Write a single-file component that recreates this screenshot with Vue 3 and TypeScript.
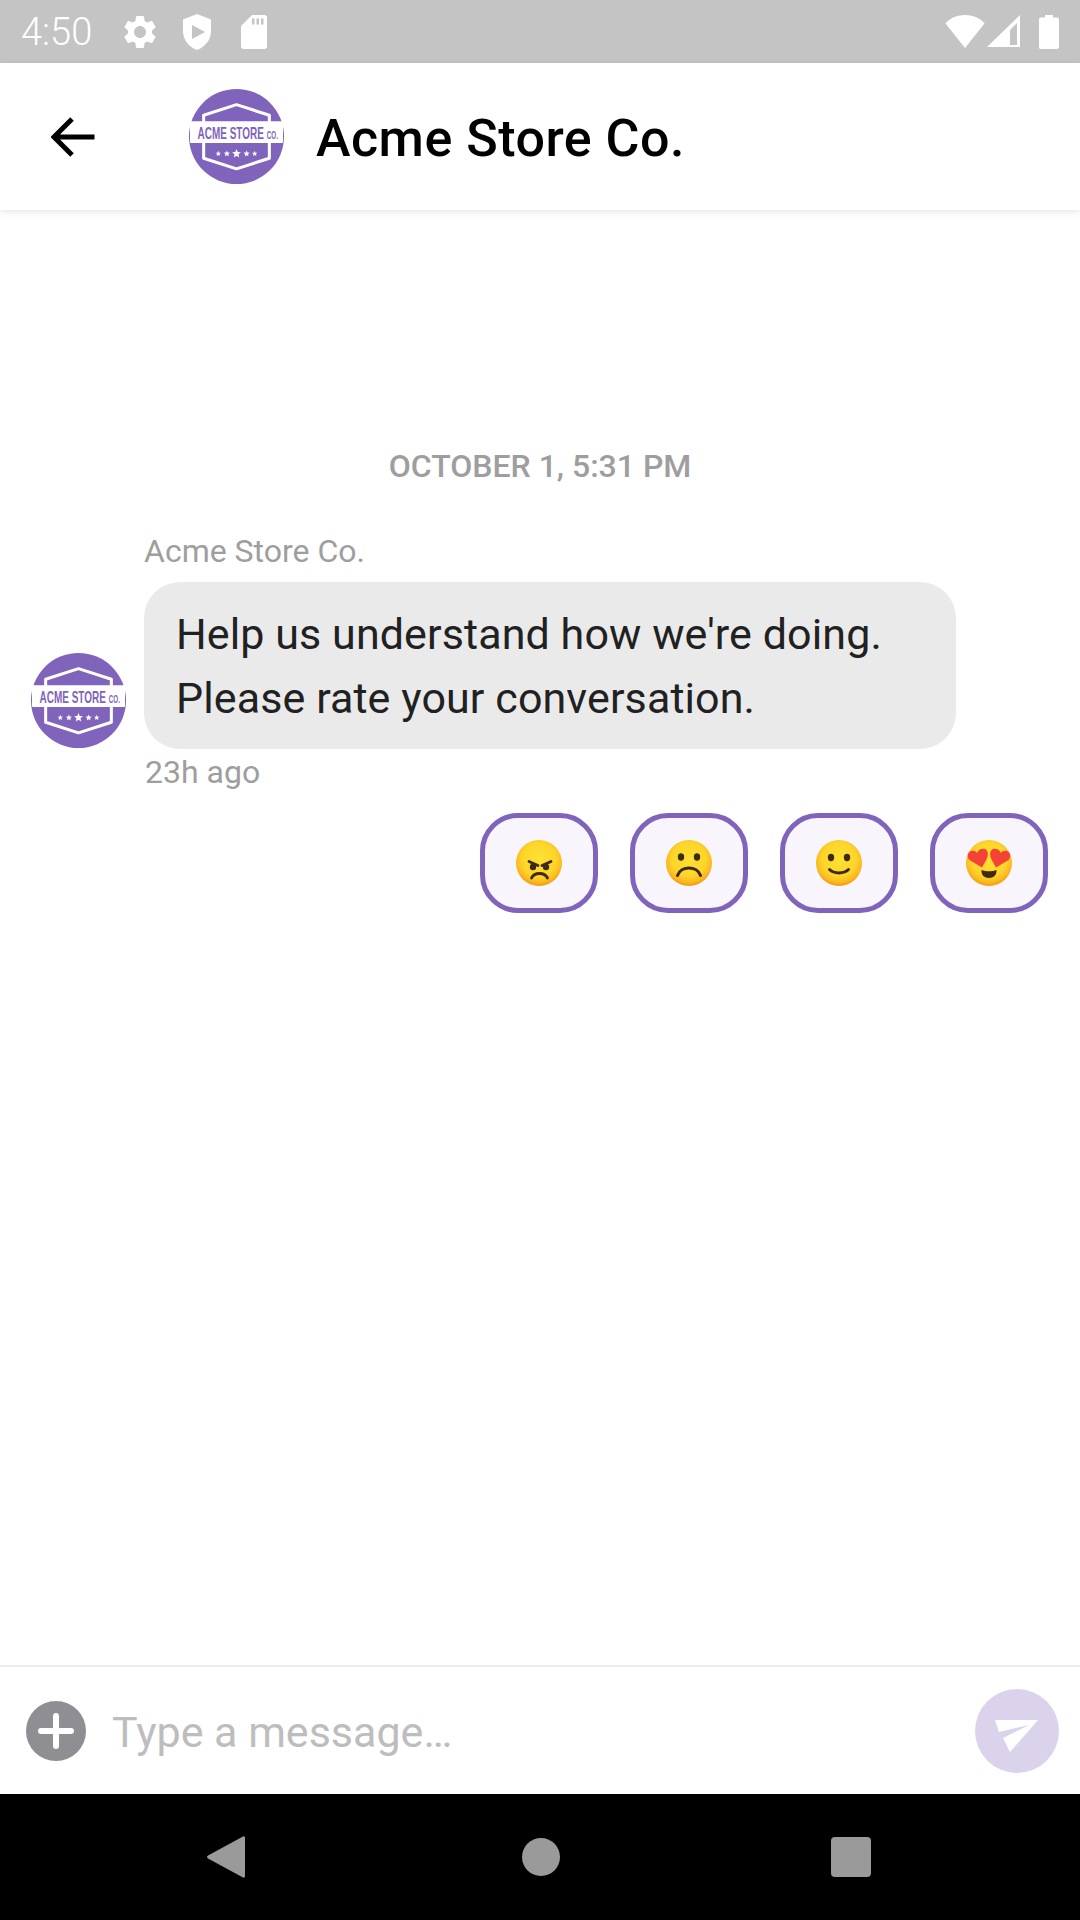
<template>
  <div class="screen">
    <!-- shared logo -->
    <svg class="defs" width="0" height="0" aria-hidden="true">
      <defs>
        <symbol id="acme-logo" viewBox="0 0 94 94">
          <circle cx="47" cy="47" r="47" fill="#8064bb" />
          <path d="M47 15.5 79.5 26V68.5L47 79 14.5 68.5V26Z" fill="none" stroke="#fff" stroke-width="3" stroke-linejoin="round" />
          <rect x="1" y="32" width="92" height="21.5" rx="1" fill="#fff" />
          <text x="8.5" y="49" textLength="65.5" lengthAdjust="spacingAndGlyphs" font-family="'Liberation Sans', sans-serif" font-weight="700" font-size="16.5" fill="#8064bb">ACME STORE</text>
          <text x="77" y="49" textLength="11" lengthAdjust="spacingAndGlyphs" font-family="'Liberation Sans', sans-serif" font-weight="700" font-size="10" fill="#8064bb">CO.</text>
          <polygon v-for="s in stars" :key="s.x" :points="starPoints(s.x, 64, s.r)" fill="#fff" />
        </symbol>
        <radialGradient id="face" cx="50%" cy="42%" r="56%">
          <stop offset="0%" stop-color="#fee133" />
          <stop offset="66%" stop-color="#fdd52a" />
          <stop offset="90%" stop-color="#fbb81f" />
          <stop offset="100%" stop-color="#f59e16" />
        </radialGradient>
      </defs>
    </svg>

    <div class="status-bar">
      <span class="clock">4:50</span>
      <svg class="st gear" viewBox="0 0 24 24"><path fill="#fff" d="M19.14 12.94c.04-.3.06-.61.06-.94 0-.32-.02-.64-.07-.94l2.03-1.58c.18-.14.23-.41.12-.61l-1.92-3.32c-.12-.22-.37-.29-.59-.22l-2.39.96c-.5-.38-1.03-.7-1.62-.94l-.36-2.54c-.04-.24-.24-.41-.48-.41h-3.84c-.24 0-.43.17-.47.41l-.36 2.54c-.59.24-1.13.57-1.62.94l-2.39-.96c-.22-.08-.47 0-.59.22L2.74 8.87c-.12.21-.08.47.12.61l2.03 1.58c-.05.3-.09.63-.09.94s.02.64.07.94l-2.03 1.58c-.18.14-.23.41-.12.61l1.92 3.32c.12.22.37.29.59.22l2.39-.96c.5.38 1.03.7 1.62.94l.36 2.54c.05.24.24.41.48.41h3.84c.24 0 .44-.17.47-.41l.36-2.54c.59-.24 1.13-.56 1.62-.94l2.39.96c.22.08.47 0 .59-.22l1.92-3.32c.12-.22.07-.47-.12-.61l-2.01-1.58zM12 15.6c-1.98 0-3.6-1.62-3.6-3.6s1.62-3.6 3.6-3.6 3.6 1.62 3.6 3.6-1.62 3.6-3.6 3.6z" /></svg>
      <svg class="st shield" viewBox="0 0 30 36"><path fill="#fff" fill-rule="evenodd" d="M15 0 29 5.5V17C29 26 23 33 15 36 7 33 1 26 1 17V5.5ZM10 11V25L23 18Z" /></svg>
      <svg class="st sd" viewBox="0 0 26 34"><path fill="#fff" fill-rule="evenodd" d="M11 0H23.5C25 0 26 1 26 2.5V31.5C26 33 25 34 23.5 34H2.5C1 34 0 33 0 31.5V11ZM11 3.5V9.5H13.5V3.5ZM15.5 3.5V9.5H18V3.5ZM20 3.5V9.5H22.5V3.5Z" /></svg>
      <span class="status-spacer"></span>
      <svg class="st wifi" viewBox="0 0 40 33"><path fill="#fff" d="M20 33 0.5 8.5C4 4 11 0 20 0S36 4 39.5 8.5Z" /></svg>
      <svg class="st signal" viewBox="0 0 33 33"><path fill="#fff" fill-rule="evenodd" d="M33 0V32H0ZM30 8 23 15V30H30Z" /></svg>
      <svg class="st battery" viewBox="0 0 20 34"><path fill="#fff" d="M6 0H14V2.5H18C19.2 2.5 20 3.3 20 4.5V32C20 33.2 19.2 34 18 34H2C.8 34 0 33.2 0 32V4.5C0 3.3.8 2.5 2 2.5H6Z" /></svg>
    </div>

    <header class="app-header">
      <svg class="back" viewBox="0 0 44 40"><path d="M43.5 20H3M21 2 3 20 21 38" fill="none" stroke="#000" stroke-width="5" /></svg>
      <svg class="avatar-lg"><use href="#acme-logo" /></svg>
      <h1 class="title">Acme Store Co.</h1>
    </header>

    <main class="thread">
      <div class="date">OCTOBER 1, 5:31 PM</div>
      <div class="message">
        <div class="sender">Acme Store Co.</div>
        <svg class="avatar-sm"><use href="#acme-logo" /></svg>
        <div class="bubble">Help us understand how we're doing.<br />Please rate your conversation.</div>
        <div class="time">23h ago</div>
      </div>
      <div class="ratings">
        <button class="rate" aria-label="Angry">
          <svg class="emoji" viewBox="0 0 46 46">
            <circle cx="23" cy="23" r="23" fill="url(#face)" />
            <path d="M13 21.5 22 25.5M35 21.5 26 25.5" stroke="#3e2a0c" stroke-width="2.8" stroke-linecap="round" fill="none" />
            <circle cx="17" cy="27" r="3.2" fill="#3e2a0c" />
            <circle cx="30" cy="27" r="3.2" fill="#3e2a0c" />
            <path d="M15.5 38C18.5 32 28.5 32 31.5 38" stroke="#3e2a0c" stroke-width="2.8" stroke-linecap="round" fill="none" />
          </svg>
        </button>
        <button class="rate" aria-label="Sad">
          <svg class="emoji" viewBox="0 0 46 46">
            <circle cx="23" cy="23" r="23" fill="url(#face)" />
            <ellipse cx="15" cy="17" rx="3.2" ry="3.7" fill="#3e2a0c" />
            <ellipse cx="31" cy="17" rx="3.2" ry="3.7" fill="#3e2a0c" />
            <path d="M11.5 35.5C15 25.5 31 25.5 34.5 35.5" stroke="#3e2a0c" stroke-width="3" stroke-linecap="round" fill="none" />
          </svg>
        </button>
        <button class="rate" aria-label="Smile">
          <svg class="emoji" viewBox="0 0 46 46">
            <circle cx="23" cy="23" r="23" fill="url(#face)" />
            <ellipse cx="15" cy="17.5" rx="3.2" ry="3.7" fill="#3e2a0c" />
            <ellipse cx="31" cy="17.5" rx="3.2" ry="3.7" fill="#3e2a0c" />
            <path d="M13.5 29.5C18 34 28 34 32.5 29.5" stroke="#3e2a0c" stroke-width="3" stroke-linecap="round" fill="none" />
          </svg>
        </button>
        <button class="rate" aria-label="Love">
          <svg class="emoji" viewBox="0 0 46 46">
            <circle cx="23" cy="23" r="23" fill="url(#face)" />
            <path d="M16 27.5 3.5 20C.5 17 1.5 11.5 6 10.8 8.2 10.5 10 11.3 11 13 12.5 9.5 16 8 19 9 22.5 10.5 22.5 15.5 20.5 19.5Z" fill="#f44336" />
            <path d="M30 27.5 42.5 20C45.5 17 44.5 11.5 40 10.8 37.8 10.5 36 11.3 35 13 33.5 9.5 30 8 27 9 23.5 10.5 23.5 15.5 25.5 19.5Z" fill="#f44336" />
            <path d="M15.5 30C19.5 31.8 26.5 31.8 30.5 30 31 35 27.5 38 23 38S15 35 15.5 30Z" fill="#3e2a0c" />
          </svg>
        </button>
      </div>
    </main>

    <div class="composer">
      <svg class="plus" viewBox="0 0 60 60">
        <circle cx="30" cy="30" r="30" fill="#8e8e93" />
        <path d="M30 15V45M15 30H45" stroke="#fff" stroke-width="6" stroke-linecap="round" />
      </svg>
      <span class="placeholder">Type a message…</span>
      <div class="send">
        <svg viewBox="0 0 44 33" class="send-icon">
          <path fill="#fff" d="M0 0H43L15 32 8 18 34 5 4 12Z" />
        </svg>
      </div>
    </div>

    <nav class="nav-bar">
      <svg class="nav-back" viewBox="0 0 38 42"><path fill="#9a9a9a" d="M36 .5C37 0 38 .7 38 2V40C38 41.3 37 42 36 41.5L1 22.5C-.3 21.8-.3 20.2 1 19.5Z" /></svg>
      <span class="nav-home"></span>
      <span class="nav-recent"></span>
    </nav>
  </div>
</template>

<script setup lang="ts">
const stars = [
  { x: 29, r: 2.8 },
  { x: 37.5, r: 3.2 },
  { x: 47, r: 4.6 },
  { x: 57, r: 3.2 },
  { x: 65, r: 2.8 },
]

const starPoints = (cx: number, cy: number, r: number) => {
  const pts: string[] = []
  for (let i = 0; i < 10; i++) {
    const rad = i % 2 === 0 ? r : r * 0.45
    const a = (Math.PI / 5) * i - Math.PI / 2
    pts.push(`${(cx + rad * Math.cos(a)).toFixed(2)},${(cy + rad * Math.sin(a)).toFixed(2)}`)
  }
  return pts.join(' ')
}
</script>

<style>
html,
body {
  margin: 0;
  background: #fff;
}
</style>

<style scoped>
.screen {
  width: 1080px;
  height: 1920px;
  display: flex;
  flex-direction: column;
  overflow: hidden;
  background: #fff;
  font-family: Roboto, "Liberation Sans", sans-serif;
}

.defs {
  position: absolute;
}

.status-bar {
  height: 63px;
  flex: none;
  display: flex;
  align-items: center;
  padding: 0 21px;
  box-sizing: border-box;
  background: #c4c4c4;
}

.clock {
  color: #fff;
  font-size: 38px;
  font-weight: 300;
  margin-right: 31px;
}

.st {
  flex: none;
  display: block;
}

.gear {
  width: 40px;
  height: 40px;
  margin-right: 22px;
  margin-left: -3px;
}

.shield {
  width: 30px;
  height: 36px;
  margin-right: 29px;
}

.sd {
  width: 26px;
  height: 34px;
}

.status-spacer {
  flex: 1;
}

.wifi {
  width: 40px;
  height: 33px;
}

.signal {
  width: 33px;
  height: 33px;
  margin-left: 2px;
}

.battery {
  width: 20px;
  height: 34px;
  margin-left: 19px;
}

.app-header {
  height: 147px;
  flex: none;
  display: flex;
  align-items: center;
  padding-left: 51px;
  box-sizing: border-box;
  background: #fff;
  box-shadow: 0 2px 7px rgba(0, 0, 0, 0.1);
  position: relative;
}

.back {
  width: 44px;
  height: 40px;
  margin-right: 94px;
}

.avatar-lg {
  width: 95px;
  height: 95px;
  margin-right: 32px;
}

.title {
  margin: 0;
  padding-top: 3px;
  font-size: 52px;
  letter-spacing: 0.5px;
  font-weight: 500;
  color: #000;
}

.thread {
  flex: 1;
  padding-top: 239px;
  display: flex;
  flex-direction: column;
}

.date {
  text-align: center;
  font-size: 32px;
  line-height: 34px;
  font-weight: 500;
  color: #9e9e9e;
}

.message {
  display: grid;
  grid-template-columns: 95px auto;
  column-gap: 18px;
  justify-content: start;
  padding-left: 31px;
  margin-top: 50px;
}

.sender {
  grid-column: 2;
  font-size: 32px;
  line-height: 36px;
  color: #9e9e9e;
  margin-bottom: 13px;
}

.avatar-sm {
  grid-column: 1;
  grid-row: 2;
  align-self: end;
  width: 95px;
  height: 95px;
  margin-bottom: 1px;
}

.bubble {
  grid-column: 2;
  grid-row: 2;
  width: 812px;
  height: 167px;
  padding: 20px 32px 0;
  box-sizing: border-box;
  border-radius: 36px;
  background: #eaeaea;
  font-size: 43px;
  letter-spacing: 0.1px;
  line-height: 64px;
  color: #212121;
}

.time {
  grid-column: 2;
  padding-left: 1px;
  font-size: 32px;
  line-height: 36px;
  color: #9e9e9e;
  margin-top: 5px;
}

.ratings {
  display: flex;
  justify-content: flex-end;
  gap: 32px;
  padding-right: 32px;
  margin-top: 23px;
}

.rate {
  width: 118px;
  height: 100px;
  padding: 0;
  display: flex;
  align-items: center;
  justify-content: center;
  box-sizing: border-box;
  border: 5px solid #8064bb;
  border-radius: 38px;
  background: #f8f5fd;
}

.emoji {
  width: 46px;
  height: 46px;
}

.composer {
  height: 129px;
  flex: none;
  display: flex;
  align-items: center;
  box-sizing: border-box;
  border-top: 2px solid #ececec;
  padding: 0 21px 0 26px;
  background: #fff;
}

.plus {
  width: 60px;
  height: 60px;
  margin-right: 26px;
}

.placeholder {
  flex: 1;
  padding-top: 3px;
  font-size: 43px;
  color: #bdbdbd;
}

.send {
  width: 84px;
  height: 84px;
  border-radius: 50%;
  background: #dbd2ec;
  display: flex;
  align-items: center;
  justify-content: center;
}

.send-icon {
  width: 44px;
  height: 33px;
  margin-top: 12px;
}

.nav-bar {
  height: 126px;
  flex: none;
  background: #000;
  position: relative;
}

.nav-back,
.nav-home,
.nav-recent {
  position: absolute;
  display: block;
}

.nav-back {
  left: 207px;
  top: 42px;
  width: 38px;
  height: 42px;
}

.nav-home {
  left: 522px;
  top: 44px;
  width: 38px;
  height: 38px;
  border-radius: 50%;
  background: #9a9a9a;
}

.nav-recent {
  left: 831px;
  top: 43px;
  width: 40px;
  height: 40px;
  border-radius: 4px;
  background: #9a9a9a;
}
</style>
